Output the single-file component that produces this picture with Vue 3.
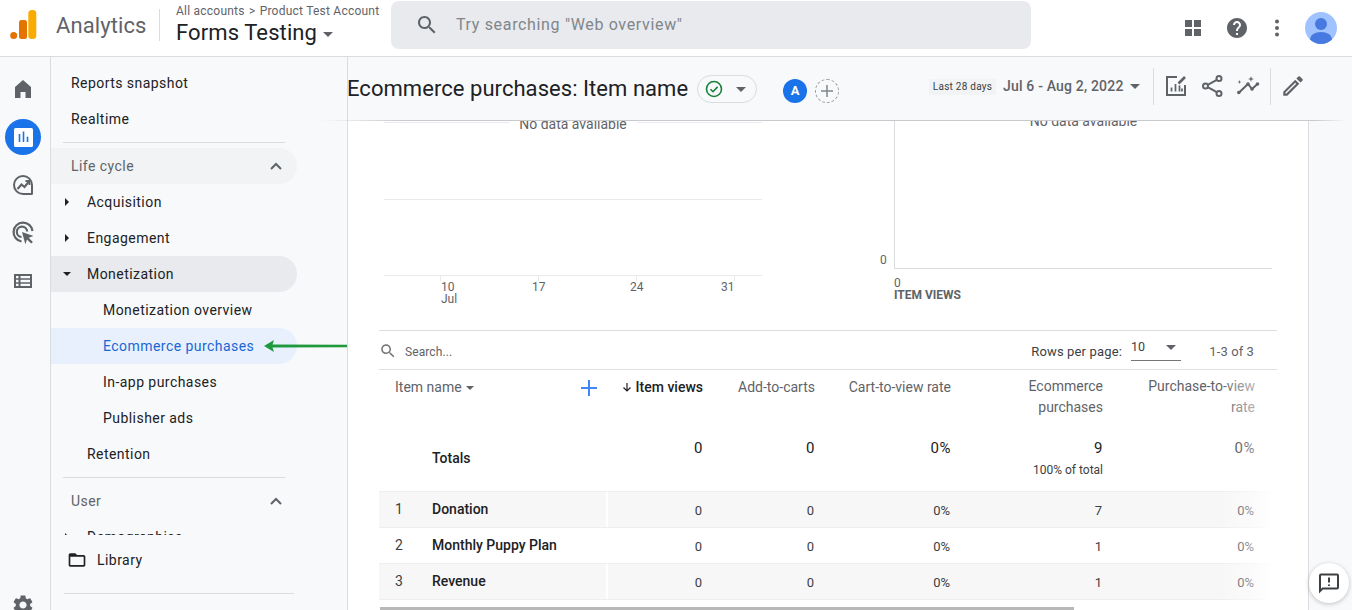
<script setup>
const items = [
  { label: 'Reports snapshot', cls: 'top' },
  { label: 'Realtime', cls: 'top' },
]
const groupOne = [
  { label: 'Acquisition', caret: 'right', cls: 'lvl1' },
  { label: 'Engagement', caret: 'right', cls: 'lvl1' },
  { label: 'Monetization', caret: 'down', cls: 'lvl1 open' },
  { label: 'Monetization overview', cls: 'lvl2' },
  { label: 'Ecommerce purchases', cls: 'lvl2 active' },
  { label: 'In-app purchases', cls: 'lvl2' },
  { label: 'Publisher ads', cls: 'lvl2' },
  { label: 'Retention', cls: 'lvl1' },
]
const rows = [
  { rank: 1, name: 'Donation', vals: ['0', '0', '0%', '7', '0%'] },
  { rank: 2, name: 'Monthly Puppy Plan', vals: ['0', '0', '0%', '1', '0%'] },
  { rank: 3, name: 'Revenue', vals: ['0', '0', '0%', '1', '0%'] },
]
</script>

<template>
  <div class="app">
    <header class="topbar">
      <svg class="logo" width="28" height="30" viewBox="0 0 28 30">
        <circle cx="3.7" cy="25.5" r="3.5" fill="#e37400" />
        <rect x="9" y="10" width="8" height="19" rx="2.5" fill="#e37400" />
        <rect x="18.3" y="0" width="8" height="29" rx="3.5" fill="#f9ab00" />
      </svg>
      <span class="brand">Analytics</span>
      <span class="brand-sep"></span>
      <div class="account">
        <div class="crumbs">All accounts <span class="chev">&gt;</span> Product Test Account</div>
        <div class="prop">Forms Testing <i class="tri prop-tri"></i></div>
      </div>
      <div class="searchbox">
        <svg width="24" height="24" viewBox="0 0 24 24" fill="#5f6368"><path d="M15.5 14h-.79l-.28-.27C15.41 12.59 16 11.11 16 9.5 16 5.91 13.09 3 9.5 3S3 5.91 3 9.5 5.91 16 9.5 16c1.61 0 3.09-.59 4.23-1.57l.27.28v.79l5 4.99L20.49 19l-4.99-5zm-6 0C7.01 14 5 11.99 5 9.5S7.01 5 9.5 5 14 7.01 14 9.5 11.99 14 9.5 14z"/></svg>
        <span class="ph">Try searching "Web overview"</span>
      </div>
      <div class="top-actions">
        <svg width="16" height="16" viewBox="0 0 16 16" fill="#5f6368"><rect width="7" height="7"/><rect x="9" width="7" height="7"/><rect y="9" width="7" height="7"/><rect x="9" y="9" width="7" height="7"/></svg>
        <svg class="help" width="24" height="24" viewBox="0 0 24 24" fill="#5f6368"><path d="M12 2C6.48 2 2 6.48 2 12s4.48 10 10 10 10-4.48 10-10S17.52 2 12 2zm1 17h-2v-2h2v2zm2.07-7.75l-.9.92C13.45 12.9 13 13.5 13 15h-2v-.5c0-1.1.45-2.1 1.17-2.83l1.24-1.26c.37-.36.59-.86.59-1.41 0-1.1-.9-2-2-2s-2 .9-2 2H8c0-2.21 1.79-4 4-4s4 1.79 4 4c0 .88-.36 1.68-.93 2.25z"/></svg>
        <svg class="dots" width="6" height="18" viewBox="0 0 6 18" fill="#5f6368"><circle cx="3" cy="2.5" r="2"/><circle cx="3" cy="9" r="2"/><circle cx="3" cy="15.5" r="2"/></svg>
        <svg class="avatar" width="32" height="32" viewBox="0 0 32 32">
          <defs><clipPath id="av"><circle cx="16" cy="16" r="16"/></clipPath></defs>
          <circle cx="16" cy="16" r="16" fill="#a0c3ff"/>
          <g clip-path="url(#av)" fill="#4779e0"><circle cx="16" cy="12" r="6"/><ellipse cx="16" cy="27" rx="11" ry="7"/></g>
        </svg>
      </div>
    </header>

    <div class="body">
      <nav class="rail">
        <svg class="rail-ic" width="24" height="24" viewBox="0 0 24 24" fill="#5f6368"><path d="M12 3 4 10v11h5.5v-6h5v6H20V10z"/></svg>
        <div class="rail-active">
          <svg width="19" height="19" viewBox="0 0 19 19"><rect width="19" height="19" rx="1.5" fill="#fff"/><g fill="#1a73e8"><rect x="4.7" y="6" width="1.6" height="8"/><rect x="8.7" y="3.5" width="1.6" height="10.5"/><rect x="12.7" y="8.7" width="1.6" height="5.3"/></g></svg>
        </div>
        <svg class="rail-ic" width="24" height="24" viewBox="0 0 24 24" fill="none" stroke="#5f6368" stroke-width="2"><path d="M21 12A9 9 0 1 0 12 21H20.5A.5.5 0 0 0 21 20.5z"/><path d="M6.5 16l4-4.500 3 2.500 4.500-5.500" stroke-width="2.200"/><path d="M14.500 8H18.500V12" stroke-width="1.800"/></svg>
        <svg class="rail-ic" width="24" height="24" viewBox="0 0 24 24" fill="none" stroke="#5f6368" stroke-width="2.200"><path d="M10.500 20.500A9.500 9.500 0 1 1 21.500 10"/><path d="M10.500 16A5.200 5.200 0 1 1 16.200 10.500"/><path d="M11 11l11.500 4-4.800 1.700 4.200 4.200-1.700 1.700-4.200-4.200-1.700 4.800z" fill="#5f6368" stroke="none"/></svg>
        <svg class="rail-ic" width="24" height="24" viewBox="0 0 24 24" fill="#5f6368"><path d="M3 5h18v14H3zM5 9.300h2.500V7H5zm4.500 0H19V7H9.500zM5 13.200h2.500v-2.400H5zm4.500 0H19v-2.400H9.500zM5 17h2.500v-2.300H5zm4.500 0H19v-2.300H9.500z" fill-rule="evenodd"/></svg>
        <svg class="rail-gear" width="24" height="24" viewBox="0 0 24 24" fill="#5f6368"><path d="M19.140 12.940c.04-.3.06-.61.06-.94 0-.32-.02-.64-.07-.94l2.030-1.580c.18-.14.23-.41.12-.61l-1.920-3.320c-.12-.22-.37-.29-.59-.22l-2.390.96c-.5-.38-1.030-.7-1.620-.94l-.36-2.540c-.04-.24-.24-.41-.48-.41h-3.840c-.24 0-.43.17-.47.41l-.36 2.540c-.59.24-1.130.57-1.620.94l-2.390-.96c-.22-.08-.47 0-.59.22L2.740 8.870c-.12.21-.08.47.12.61l2.030 1.580c-.05.3-.09.63-.09.94s.02.64.07.94l-2.030 1.580c-.18.14-.23.41-.12.61l1.920 3.320c.12.22.37.29.59.22l2.390-.96c.5.38 1.030.7 1.620.94l.36 2.540c.05.24.24.41.48.41h3.840c.24 0 .44-.17.47-.41l.36-2.540c.59-.24 1.130-.56 1.620-.94l2.390.96c.22.08.47 0 .59-.22l1.920-3.320c.12-.22.07-.47-.12-.61l-2.010-1.580zM12 15.600c-1.980 0-3.600-1.620-3.600-3.600s1.620-3.600 3.600-3.600 3.600 1.620 3.600 3.600-1.620 3.600-3.600 3.600z"/></svg>
      </nav>

      <aside class="side">
        <div class="side-scroll">
          <div v-for="it in items" :key="it.label" class="nav" :class="it.cls">{{ it.label }}</div>
          <div class="rule"></div>
          <div class="nav section shaded">
            <span>Life cycle</span>
            <svg width="12" height="8" viewBox="0 0 12 8" fill="none" stroke="#5f6368" stroke-width="2"><path d="M1 7l5-5 5 5"/></svg>
          </div>
          <div v-for="it in groupOne" :key="it.label" class="nav" :class="it.cls">
            <i v-if="it.caret" class="caret" :class="it.caret"></i>
            <span>{{ it.label }}</span>
          </div>
          <div class="rule"></div>
          <div class="nav section">
            <span>User</span>
            <svg width="12" height="8" viewBox="0 0 12 8" fill="none" stroke="#5f6368" stroke-width="2"><path d="M1 7l5-5 5 5"/></svg>
          </div>
          <div class="nav lvl1"><i class="caret right"></i><span>Demographics</span></div>
        </div>
        <div class="library">
          <div class="lib-row">
            <svg width="20" height="20" viewBox="0 0 24 24" fill="#202124"><path d="M20 6h-8l-2-2H4c-1.100 0-1.990.9-1.990 2L2 18c0 1.100.9 2 2 2h16c1.100 0 2-.9 2-2V8c0-1.100-.9-2-2-2zm0 12H4V8h16v10z"/></svg>
            <span>Library</span>
          </div>
          <div class="lib-rule"></div>
        </div>
      </aside>

      <main class="main">
        <div class="pagehead">
          <h1>Ecommerce purchases: Item name</h1>
          <div class="pill">
            <svg width="18" height="18" viewBox="0 0 18 18" fill="none"><circle cx="9" cy="9" r="7.500" stroke="#188038" stroke-width="1.600"/><path d="M5.500 9.200 8 11.700l4.600-4.800" stroke="#188038" stroke-width="1.600"/></svg>
            <i class="tri"></i>
          </div>
          <span class="badge-a">A</span>
          <span class="badge-add">
            <svg width="14" height="14" viewBox="0 0 14 14" stroke="#80868b" stroke-width="1.500"><path d="M7 1v12M1 7h12"/></svg>
          </span>
          <div class="head-right">
            <span class="range-tag">Last 28 days</span>
            <span class="range">Jul 6 - Aug 2, 2022</span>
            <i class="tri"></i>
            <span class="vsep first"></span>
            <svg class="tool" width="24" height="24" viewBox="0 0 24 24" fill="none" stroke="#5f6368" stroke-width="2"><path d="M13 3H3v18h18V11"/><path d="M7.500 17.500v-4M11.500 17.500V10M15.500 17.500v-6M18 17.500v-3" stroke-width="1.700"/><path d="M14.500 9.500 21 3" stroke-width="2.600"/></svg>
            <svg class="tool" width="24" height="24" viewBox="0 0 24 24" fill="none" stroke="#5f6368" stroke-width="2"><circle cx="19" cy="4.500" r="2.500"/><circle cx="5.500" cy="12" r="2.500"/><circle cx="19" cy="19.500" r="2.500"/><path d="M7.700 10.800l9.100-5M7.700 13.200l9.100 5"/></svg>
            <svg class="tool last" width="24" height="24" viewBox="0 0 24 24" fill="#5f6368"><path d="M2.500 19 12 10l4 5 5.500-5" fill="none" stroke="#5f6368" stroke-width="2"/><circle cx="2.800" cy="18.500" r="1.800"/><circle cx="12" cy="10" r="1.800"/><circle cx="16" cy="15" r="1.800"/><circle cx="21.500" cy="10" r="1.800"/><path d="M3.500 6l.5 1.500 1.500.5-1.500.5L3.500 10 3 8.500 1.500 8 3 7.500zM15 2l.7 2.300L18 5l-2.300.7L15 8l-.7-2.300L12 5l2.300-.7z"/></svg>
            <span class="vsep"></span>
            <svg class="pencil" width="26" height="26" viewBox="0 0 24 24" fill="#5f6368"><path d="M3 17.250V21h3.750L17.810 9.940l-3.750-3.750L3 17.250zM5.920 19H5v-.92l9.060-9.060.92.92L5.920 19zM20.710 7.040a.996.996 0 0 0 0-1.410l-2.340-2.340a.996.996 0 0 0-1.410 0l-1.830 1.830 3.750 3.750 1.830-1.830z"/></svg>
          </div>
        </div>

        <div class="content">
          <svg class="charts" width="960" height="209" viewBox="0 0 960 209">
            <g stroke="#e8eaed" stroke-width="1" shape-rendering="crispEdges">
              <path d="M36 1.500H161M289 1.500H414M36 78.500H414M36 154.500H414"/>
              <path d="M92.500 155V160M190.500 155V160M288.500 155V160M386.500 155V160"/>
            </g>
            <path d="M546.500 0V147.500H924" fill="none" stroke="#dadce0" stroke-width="1" shape-rendering="crispEdges"/>
            <g class="axis">
              <text x="225" y="7.500" class="nodata">No data available</text>
              <text x="735.500" y="4.500" class="nodata">No data available</text>
              <text x="93" y="170">10</text>
              <text x="93" y="182">Jul</text>
              <text x="184" y="170">17</text>
              <text x="282" y="170">24</text>
              <text x="373" y="170">31</text>
              <text x="532" y="143">0</text>
              <text x="546" y="166">0</text>
              <text x="546" y="178" class="axis-title">ITEM VIEWS</text>
            </g>
          </svg>

          <section class="report">
            <div class="tb-row">
              <svg width="18" height="18" viewBox="0 0 24 24" fill="#757575"><path d="M15.500 14h-.79l-.28-.27C15.410 12.590 16 11.110 16 9.500 16 5.910 13.090 3 9.500 3S3 5.910 3 9.500 5.910 16 9.500 16c1.610 0 3.090-.59 4.230-1.570l.27.28v.79l5 4.990L20.490 19l-4.990-5zm-6 0C7.010 14 5 11.990 5 9.500S7.010 5 9.500 5 14 7.010 14 9.500 11.990 14 9.500 14z"/></svg>
              <span class="tb-search">Search...</span>
              <span class="tb-rows">Rows per page:</span>
              <div class="tb-select"><span>10</span><i class="tri"></i></div>
              <span class="tb-count">1-3 of 3</span>
            </div>

            <div class="grid ghead">
              <div class="c-name one">
                <span>Item name</span><i class="tri small"></i>
                <svg class="addcol" width="18" height="18" viewBox="0 0 18 18" stroke="#4285f4" stroke-width="2"><path d="M9 1v16M1 9h16"/></svg>
              </div>
              <div class="num strong one"><svg width="10" height="10" viewBox="0 0 10 10" fill="none" stroke="#202124" stroke-width="1.200"><path d="M5 1v8M1.500 5.500 5 9l3.500-3.500"/></svg> Item views</div>
              <div class="num one">Add-to-carts</div>
              <div class="num one">Cart-to-view rate</div>
              <div class="num">Ecommerce<br />purchases</div>
              <div class="num">Purchase-to-view<br />rate</div>
            </div>

            <div class="grid gtotal">
              <div class="c-total">Totals</div>
              <div class="num t">0</div>
              <div class="num t">0</div>
              <div class="num t">0%</div>
              <div class="num t">9<small>100% of total</small></div>
              <div class="num t">0%</div>
            </div>

            <div v-for="r in rows" :key="r.rank" class="grid grow" :class="{ odd: r.rank % 2 === 1, final: r.rank === rows.length }">
              <div class="c-dim"><span class="rank">{{ r.rank }}</span><span class="dname">{{ r.name }}</span></div>
              <div v-for="(v, i) in r.vals" :key="i" class="num v">{{ v }}</div>
            </div>
            <div class="fade"></div>
          </section>
          <div class="hscroll"></div>
        </div>

        <button class="feedback" aria-label="Feedback">
          <svg width="24" height="24" viewBox="0 0 24 24" fill="#3c4043"><path d="M4 2.500h16a2 2 0 0 1 2 2v12a2 2 0 0 1-2 2H6l-4 4v-18a2 2 0 0 1 2-2zm0 2v13.200L5.200 16.500H20v-12zm7 2h2v5h-2zm0 7h2v1.500h-2z" fill-rule="evenodd"/></svg>
        </button>
      </main>

      <svg class="arrow" width="84" height="14" viewBox="0 0 84 14">
        <path d="M0 7 10 1 8.500 5.500 83 5.800v2.400L8.500 8.500 10 13z" fill="#1e9a3c"/>
      </svg>
    </div>
  </div>
</template>

<style>
html, body { margin: 0; overflow: hidden; }
</style>

<style scoped>
.app { width: 1352px; height: 610px; overflow: hidden; display: flex; flex-direction: column; font-family: Roboto, "Liberation Sans", sans-serif; color: #202124; background: #f8f9fa; }
.topbar { flex: 0 0 56px; height: 56px; box-sizing: content-box; display: flex; align-items: center; background: #fff; border-bottom: 1px solid #dadce0; padding-left: 10px; }
.logo { flex: none; align-self: flex-start; margin-top: 10px; }
.brand { margin: 0 0 6px 18px; font-size: 22px; color: #5f6368; width: 87px; letter-spacing: .1px; }
.brand-sep { width: 1px; height: 32px; background: #dadce0; margin: 0 16px 6px; }
.account { width: 215px; align-self: flex-start; padding-top: 4px; }
.crumbs { font-size: 12px; color: #5f6368; line-height: 14px; letter-spacing: .23px; white-space: nowrap; }
.chev { display: inline-block; margin: 0 1px; }
.prop { font-size: 22px; line-height: 30px; color: #202124; white-space: nowrap; letter-spacing: .1px; }
.tri { display: inline-block; width: 0; height: 0; border-left: 5.500px solid transparent; border-right: 5.500px solid transparent; border-top: 5.500px solid #5f6368; }
.prop-tri { vertical-align: middle; }
.searchbox { width: 640px; height: 48px; margin-top: -6px; border-radius: 8px; background: #e8eaed; display: flex; align-items: center; box-sizing: border-box; padding-left: 24px; gap: 17px; color: #80868b; font-size: 16px; letter-spacing: .66px; }
.ph { margin-bottom: 2px; }
.top-actions { display: flex; align-items: center; margin-left: 154px; }
.help { margin-left: 24px; }
.dots { margin-left: 25px; }
.avatar { margin-left: 25px; }

.body { flex: 1; display: flex; position: relative; min-height: 0; }
.rail { flex: 0 0 50px; border-right: 1px solid #dadce0; position: relative; display: flex; flex-direction: column; align-items: center; padding-top: 20px; box-sizing: content-box; }
.rail-ic { margin: 0 0 24px -4px; flex: none; }
.rail-active { width: 36px; height: 36px; border-radius: 50%; background: #1a73e8; display: flex; align-items: center; justify-content: center; margin: -6px 0 18px -4px; flex: none; }
.rail-gear { position: absolute; left: 11px; top: 536px; }

.side { flex: 0 0 296px; border-right: 1px solid #dadce0; display: flex; flex-direction: column; box-sizing: content-box; }
.side-scroll { height: 478px; overflow: hidden; padding-top: 8px; box-sizing: border-box; }
.nav { height: 36px; width: 246px; display: flex; align-items: center; font-size: 14px; letter-spacing: .45px; border-radius: 0 18px 18px 0; color: #202124; position: relative; box-sizing: border-box; }
.top { padding-left: 20px; }
.lvl1 { padding-left: 36px; }
.lvl2 { padding-left: 52px; }
.open { background: #e8eaed; }
.active { background: #e8f0fe; color: #1967d2; }
.section { padding: 0 15px 0 20px; justify-content: space-between; color: #5f6368; }
.shaded { background: #f1f3f4; }
.rule { height: 1px; background: #dadce0; width: 222px; margin: 5px 0 5px 12px; }
.caret { position: absolute; width: 0; height: 0; }
.caret.right { border-top: 4px solid transparent; border-bottom: 4px solid transparent; border-left: 4px solid #202124; left: 14px; }
.caret.down { border-left: 4px solid transparent; border-right: 4px solid transparent; border-top: 4px solid #202124; left: 12px; }
.library { flex: 1; background: #f8f9fa; }
.lib-row { height: 50px; display: flex; align-items: center; gap: 10px; padding-left: 16px; font-size: 14px; letter-spacing: .45px; }
.lib-rule { height: 1px; background: #dadce0; width: 230px; margin-left: 13px; margin-top: 8px; }

.main { flex: 1; position: relative; min-width: 0; display: flex; flex-direction: column; }
.pagehead { flex: 0 0 64px; height: 64px; display: flex; align-items: center; background: #f8f9fa; position: relative; z-index: 2; }
.pagehead::after { content: ""; position: absolute; left: -28px; right: 6px; bottom: 0; height: 1px; background: linear-gradient(90deg, rgba(218,220,224,0), #c8cacd 8%, #c8cacd 97%, rgba(218,220,224,0)); }
h1 { margin: -1px 0 0 -1px; font-size: 22px; font-weight: 400; color: #202124; white-space: nowrap; width: 350px; letter-spacing: .05px; }
.pill { width: 60px; height: 28px; box-sizing: border-box; border: 1px solid #dadce0; border-radius: 14px; display: flex; align-items: center; padding-left: 7px; gap: 13px; }
.badge-a { width: 24px; height: 24px; border-radius: 50%; background: #1a73e8; color: #fff; font-size: 13px; font-weight: 700; display: flex; align-items: center; justify-content: center; margin-left: 26px; margin-top: 3px; }
.badge-add { width: 24px; height: 24px; box-sizing: border-box; border-radius: 50%; border: 1px dashed #9aa0a6; display: flex; align-items: center; justify-content: center; margin-left: 8px; margin-top: 3px; }
.head-right { margin-left: 90px; display: flex; align-items: center; margin-top: -6px; }
.range-tag { font-size: 10px; background: #f1f3f4; color: #3c4043; width: 67px; height: 16px; line-height: 16px; text-align: center; letter-spacing: .25px; white-space: nowrap; margin-top: 1px; }
.range { font-size: 14px; font-weight: 500; color: #5f6368; margin-left: 7px; width: 121px; white-space: nowrap; letter-spacing: .18px; }
.head-right .tri { margin-left: 6px; }
.vsep { width: 1px; height: 37px; background: #dadce0; margin: 0 9px 0 -2px; flex: none; }
.vsep.first { margin: 0 10px 0 13px; }
.tool { margin-right: 12px; flex: none; }
.tool.last { margin-right: 12px; }

.content { flex: 1; width: 961px; box-sizing: border-box; background: #fff; border-right: 1px solid #dadce0; position: relative; min-height: 0; overflow: hidden; }
.charts { display: block; }
.axis text { font-size: 12px; fill: #5f6368; font-family: Roboto, sans-serif; }
.axis .nodata { font-size: 14px; text-anchor: middle; }
.axis .axis-title { font-weight: 700; }

.report { margin-left: 31px; width: 898px; border-top: 1px solid #dadce0; position: relative; }
.tb-row { height: 38px; display: flex; align-items: center; border-bottom: 1px solid #e0e0e0; font-size: 13px; color: #5f6368; }
.tb-row > svg { margin-top: 2px; }
.tb-search { margin: 4px 0 0 8px; font-size: 12px; letter-spacing: .1px; }
.tb-rows { margin: 2px 0 0 auto; color: #3c4043; letter-spacing: .15px; }
.tb-select { width: 50px; height: 24px; margin: -2px 0 0 9px; box-sizing: border-box; border-bottom: 1px solid #757575; display: flex; align-items: center; justify-content: space-between; padding-right: 5px; color: #3c4043; font-size: 12.500px; }
.tb-select span { margin-top: -4px; }
.tb-select .tri { border-left-width: 5px; border-right-width: 5px; border-top-width: 5px; margin-top: -2px; }
.tb-count { width: 73px; text-align: right; margin: 2px 23px 0 0; letter-spacing: .1px; }

.grid { display: grid; grid-template-columns: 228px 96px 112px 136px 152px 152px 22px; }
.num { text-align: right; }
.ghead { height: 60px; font-size: 14px; color: #5f6368; line-height: 21px; padding-top: 6px; box-sizing: border-box; }
.one { padding-top: 1px; }
.c-name { padding-left: 16px; position: relative; }
.tri.small { border-left-width: 4px; border-right-width: 4px; border-top-width: 4px; margin-left: 4px; vertical-align: middle; }
.addcol { position: absolute; left: 201px; top: 3px; }
.strong { color: #202124; font-weight: 500; }
.gtotal { height: 61px; }
.c-total { padding: 20px 0 0 53px; font-size: 14px; font-weight: 500; line-height: 16px; }
.t { padding-top: 11px; font-size: 15px; line-height: 14px; letter-spacing: .5px; }
.t small { display: block; font-size: 12px; margin-top: 8px; letter-spacing: 0; line-height: 14px; color: #3c4043; }
.grow { height: 36px; border-top: 1px solid #eeeeee; box-sizing: border-box; align-items: center; }
.grow.odd { background: #f7f7f7; }
.grow.final { height: 37px; border-bottom: 1px solid #eeeeee; }
.c-dim { display: flex; align-items: center; height: 100%; width: calc(100% + 1px); border-right: 2px solid #fff; font-size: 14px; box-sizing: border-box; padding-bottom: 2px; }
.rank { width: 53px; box-sizing: border-box; padding-left: 16px; color: #3c4043; }
.dname { font-weight: 500; color: #202124; }
.v { font-size: 13px; color: #3c4043; margin-top: 1px; padding-right: 1px; }
.fade { position: absolute; right: 0; top: 40px; bottom: 0; width: 57px; background: linear-gradient(90deg, rgba(255,255,255,0), rgba(255,255,255,.3) 30%, rgba(255,255,255,.5) 60%, #fff 92%); pointer-events: none; }
.hscroll { position: absolute; left: 32px; bottom: 0; width: 694px; height: 3px; background: #b8b8b8; }
.feedback { position: absolute; left: 961px; top: 506px; width: 40px; height: 40px; padding: 0; border: 0; border-radius: 50%; background: #fff; box-shadow: 0 1px 4px rgba(60,64,67,.3); display: flex; align-items: center; justify-content: center; z-index: 3; }
.arrow { position: absolute; left: 264px; top: 282px; z-index: 4; }
</style>
